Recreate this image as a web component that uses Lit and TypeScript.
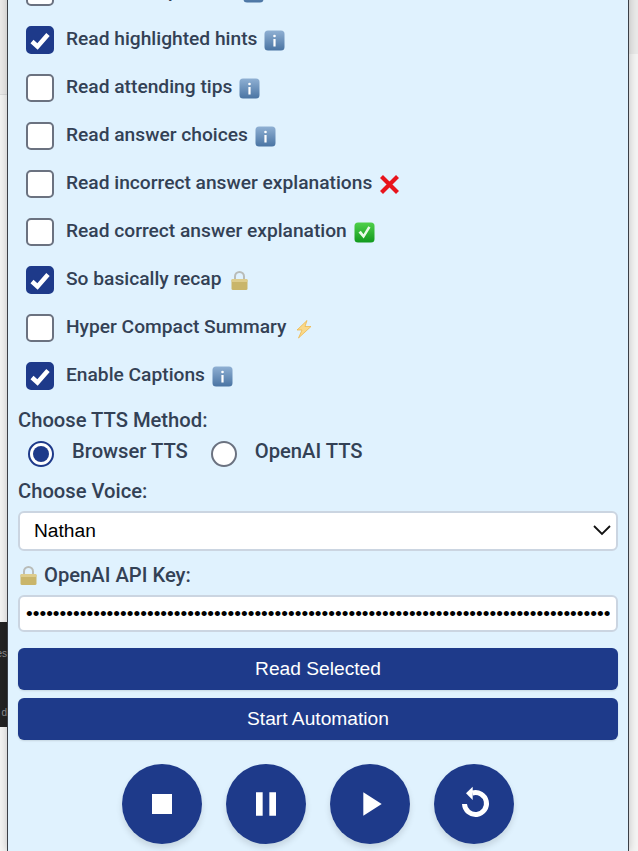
import { LitElement, html, css } from "lit";
import { customElement } from "lit/decorators.js";

const info = html`<svg class="emoji" viewBox="0 0 21 21"><defs><linearGradient id="ig" x1="0" y1="0" x2="0" y2="1"><stop offset="0" stop-color="#8fb0d3"/><stop offset="1" stop-color="#4a74a3"/></linearGradient></defs><rect x=".5" y=".5" width="20" height="20" rx="3.5" fill="url(#ig)"/><rect x="9.4" y="9" width="2.2" height="7.5" fill="#fff"/><circle cx="10.500" cy="6" r="1.300" fill="#fff"/></svg>`;
const cross = html`<svg class="emoji" viewBox="0 0 21 21"><path d="M2.500 2.500l16 16M18.500 2.500l-16 16" fill="none" stroke="#e8141c" stroke-width="4.200"/></svg>`;
const tick = html`<svg class="emoji" viewBox="0 0 21 21"><defs><linearGradient id="tg" x1="0" y1="0" x2="0" y2="1"><stop offset="0" stop-color="#4fd04a"/><stop offset="1" stop-color="#129a1e"/></linearGradient></defs><rect x=".5" y=".5" width="20" height="20" rx="3.500" fill="url(#tg)"/><path d="M4.500 10.500l2.300-1.800 2.700 3.500 4.800-8 2.200 1.400-6.800 11z" fill="#eafbe8"/></svg>`;
const lock = html`<svg class="emoji" viewBox="0 0 21 21"><path d="M6 10V6.500a4.500 4.500 0 0 1 9 0V10" fill="none" stroke="#b9bcb8" stroke-width="2"/><rect x="2.500" y="9" width="16" height="11" rx="1.500" fill="#c9b56a"/><rect x="2.500" y="9" width="16" height="3" rx="1" fill="#ddcc8c"/></svg>`;
const bolt = html`<svg class="emoji" viewBox="0 0 21 21"><path d="M14 2.500 4 12h5l-3.500 8L18 8.500h-6z" fill="#f9d98a" stroke="#eeb23f" stroke-width=".7"/></svg>`;

const rows: [string, boolean, unknown][] = [
  ["Read main question", false, info],
  ["Read highlighted hints", true, info],
  ["Read attending tips", false, info],
  ["Read answer choices", false, info],
  ["Read incorrect answer explanations", false, cross],
  ["Read correct answer explanation", false, tick],
  ["So basically recap", true, lock],
  ["Hyper Compact Summary", false, bolt],
  ["Enable Captions", true, info],
];

const mi = (d: string) => html`<svg class="mi" viewBox="0 0 24 24"><path d=${d} fill="#fff"></path></svg>`;

@customElement("app-root")
export class AppRoot extends LitElement {
  static styles = css`
    :host {
      display: flex;
      flex-direction: column;
      justify-content: flex-end;
      position: relative;
      height: 851px;
      width: 638px;
      overflow: hidden;
      background: #f4f4f3;
      font-family: Roboto, "Liberation Sans", sans-serif;
      color: #334155;
    }
    .bg-left-top {
      position: absolute; left: 0; top: 0; width: 7px; height: 94px;
      background: #ecebea; border-bottom: 1px solid #dcdcdc;
    }
    .bg-right-top {
      position: absolute; right: 0; top: 0; width: 9px; height: 54px;
      background: #e9e9e8;
    }
    .bg-dark {
      position: absolute; left: 0; top: 622px; width: 7px; height: 105px;
      background: #232323; color: #8f8f8f; font: 10px "Liberation Sans", sans-serif;
      overflow: hidden; display: flex; flex-direction: column; align-items: flex-end;
      padding-top: 26px; box-sizing: border-box; gap: 48px;
    }
    .panel {
      position: relative;
      flex: none;
      margin-left: 7px;
      width: 622px;
      box-sizing: border-box;
      border-left: 1px solid #3b3f46;
      border-right: 1px solid #3b3f46;
      background: #e0f2fe;
      padding: 0 10px 7px;
      box-shadow: 0 0 8px rgba(0, 0, 0, 0.22);
      display: flex;
      flex-direction: column;
    }
    .rows { display: flex; flex-direction: column; gap: 20px; padding-left: 8px; }
    .row { display: flex; align-items: center; height: 28px; font-size: 19.2px; font-weight: 500; }
    .box {
      flex: none; width: 28px; height: 28px; box-sizing: border-box;
      border: 2px solid #6b7280; border-radius: 5px; background: #fff;
      margin-right: 12px; display: flex; align-items: center; justify-content: center;
    }
    .box.on { background: #1e3a8a; border-color: #1e3a8a; }
    .box svg { width: 24px; height: 24px; flex: none; }
    .row .t { margin-top: -3px; }
    .emoji { width: 21px; height: 21px; margin-left: 7px; flex: none; }
    .label { font-size: 20.2px; font-weight: 500; line-height: 21px; display: flex; align-items: center; }
    .label .emoji { margin: 0 5px 0 0; }
    .tts { margin-top: 20px; }
    .radios { display: flex; align-items: center; height: 26px; margin: 10px 0 14px 10px; font-size: 20.2px; font-weight: 500; }
    .radio {
      flex: none; width: 26px; height: 26px; box-sizing: border-box; border-radius: 50%;
      border: 2px solid #6b7280; background: #fff; margin-right: 18px;
      display: flex; align-items: center; justify-content: center;
    }
    .radio.on { border-color: #1e3a8a; }
    .radio.on::after { content: ""; width: 16px; height: 16px; border-radius: 50%; background: #1e3a8a; }
    .radios .t { margin-top: -6px; margin-right: 23px; }
    .select, .key {
      display: block; width: 100%; box-sizing: border-box; background: #fff;
      border: 2px solid #cbd5e1; border-radius: 6px; outline: none; color: #000;
      font-family: "Liberation Sans", Arial, sans-serif;
    }
    .select-wrap { position: relative; margin-top: 9px; }
    .select {
      height: 40px; appearance: none; -webkit-appearance: none;
      font-size: 19.2px; padding: 0 14px 2px;
    }
    .chev { position: absolute; right: 6px; top: 13px; width: 20px; height: 12px; pointer-events: none; }
    .key-label { margin-top: 14px; }
    .key { height: 37px; margin-top: 9px; padding: 0 6px; font-size: 19.2px; }
    .btn {
      display: block; width: 100%; height: 42px; border: none; border-radius: 6px;
      background: #1e3a8a; color: #fff; font: 19.2px "Liberation Sans", Arial, sans-serif;
      box-shadow: 0 1px 2px rgba(0,0,0,.12);
    }
    .btn.first { margin-top: 16px; }
    .btn + .btn { margin-top: 8px; }
    .rounds { display: flex; justify-content: center; gap: 24px; margin-top: 24px; }
    .rd {
      width: 80px; height: 80px; border: none; border-radius: 50%; padding: 0;
      background: #1e3a8a; display: flex; align-items: center; justify-content: center;
      box-shadow: 0 4px 6px rgba(0, 0, 0, 0.12);
    }
    .mi { width: 40px; height: 40px; display: block; }
  `;

  render() {
    return html`
      <div class="bg-left-top"></div>
      <div class="bg-right-top"></div>
      <div class="bg-dark"><span>es</span><span>d</span></div>
      <div class="panel">
        <div class="rows">
          ${rows.map(([t, on, icon]) => html`
            <div class="row">
              <span class="box ${on ? "on" : ""}">
                ${on ? html`<svg viewBox="0 0 24 24"><path d="M4 13.500l5.500 5L20 6.500" fill="none" stroke="#fff" stroke-width="4.500"></path></svg>` : ""}
              </span>
              <span class="t">${t}</span>${icon}
            </div>`)}
        </div>
        <div class="label tts">Choose TTS Method:</div>
        <div class="radios">
          <span class="radio on"></span><span class="t">Browser TTS</span>
          <span class="radio"></span><span class="t">OpenAI TTS</span>
        </div>
        <div class="label">Choose Voice:</div>
        <div class="select-wrap">
          <select class="select"><option>Nathan</option></select>
          <svg class="chev" viewBox="0 0 20 12"><path d="M2 2l8 8 8-8" fill="none" stroke="#111" stroke-width="1.800"></path></svg>
        </div>
        <div class="label key-label">${lock}OpenAI API Key:</div>
        <input class="key" type="password" .value=${"x".repeat(87)} />
        <button class="btn first">Read Selected</button>
        <button class="btn">Start Automation</button>
        <div class="rounds">
          <button class="rd">${mi("M6 6h12v12H6z")}</button>
          <button class="rd">${mi("M6 19h4V5H6v14zm8-14v14h4V5h-4z")}</button>
          <button class="rd">${mi("M8 5v14l11-7z")}</button>
          <button class="rd"><svg class="mi" viewBox="0 0 24 24"><path d="M11 5.400A6.600 6.600 0 1 1 6.300 12" fill="none" stroke="#fff" stroke-width="3"></path><path d="M7.200 5.600 11.200 1.600v8z" fill="#fff"></path></svg></button>
        </div>
      </div>
    `;
  }
}
